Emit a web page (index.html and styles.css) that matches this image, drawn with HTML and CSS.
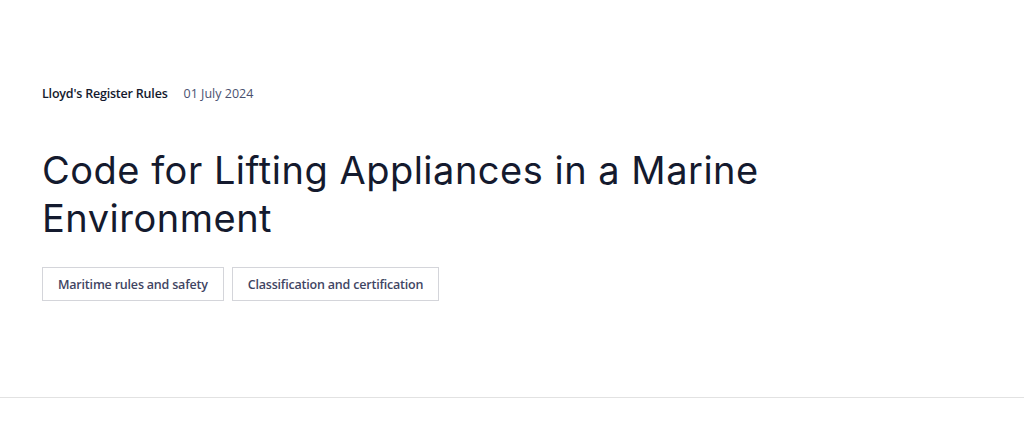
FILE: index.html
```html
<!DOCTYPE html>
<html>
<head>
<meta charset="utf-8">
<link rel="stylesheet" href="styles.css">
</head>
<body>
<section class="hero">
  <div class="meta">
    <span class="source">Lloyd's Register Rules</span>
    <span class="date">01 July 2024</span>
  </div>
  <h1 class="title">Code for Lifting Appliances in a Marine Environment</h1>
  <div class="tags">
    <span class="tag">Maritime rules and safety</span>
    <span class="tag">Classification and certification</span>
  </div>
</section>
<hr class="divider">
</body>
</html>
```
FILE: styles.css
```css
html, body {
  margin: 0;
  padding: 0;
  background: #ffffff;
}
body {
  font-family: "Open Sans", "Noto Sans", sans-serif;
  color: #141a2e;
}
.hero {
  padding: 84px 42px 0;
  height: 313px;
  box-sizing: border-box;
}
.meta {
  display: flex;
  gap: 16px;
  align-items: baseline;
  font-size: 12.5px;
  line-height: 20px;
}
.source {
  font-weight: 600;
  color: #141a2e;
  letter-spacing: -0.2px;
}
.date {
  color: #4a5170;
  letter-spacing: 0;
}
.title {
  margin: 42px 0 0;
  font-family: "Inter", "Lato", sans-serif;
  font-weight: 400;
  font-size: 38px;
  line-height: 48px;
  letter-spacing: 0.5px;
  color: #141a2e;
  max-width: 790px;
}
.tags {
  display: flex;
  gap: 8px;
  margin-top: 25px;
}
.tag {
  display: inline-flex;
  align-items: center;
  height: 34px;
  box-sizing: border-box;
  padding: 0 15px;
  border: 1px solid #d4d5da;
  font-size: 12.5px;
  font-weight: 600;
  color: #3f4563;
  letter-spacing: -0.2px;
}
.divider {
  margin: 84px 0 0;
  border: 0;
  border-top: 1px solid #e2e2e2;
  height: 0;
}
```
